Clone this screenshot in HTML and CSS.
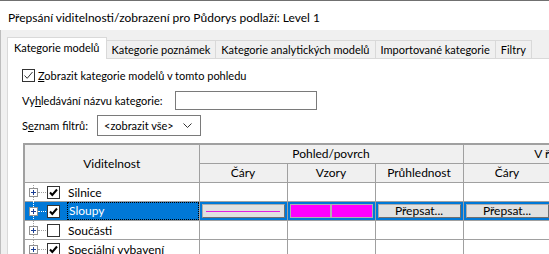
FILE: index.html
```html
<!DOCTYPE html>
<html lang="cs">
<head>
    <meta charset="UTF-8">
    <title>Přepsání viditelnosti/zobrazení</title>
    <link rel="stylesheet" href="styles.css">
</head>
<body>

<div class="window">
    <div class="titlebar">Přepsání viditelnosti/zobrazení pro Půdorys podlaží: Level 1</div>

    <div class="client">
        <div class="tabs">
            <div class="tab active">Kategorie modelů</div>
            <div class="tab">Kategorie poznámek</div>
            <div class="tab">Kategorie analytických modelů</div>
            <div class="tab">Importované kategorie</div>
            <div class="tab">Filtry</div>
        </div>

        <div class="panel">
            <label class="row check-row">
                <span class="box">
                    <svg width="11" height="11" viewBox="0 0 11 11"><path d="M1.5 5.5 L4.2 8.3 L9.5 2" fill="none" stroke="#333" stroke-width="1"/></svg>
                </span>
                <span><u>Z</u>obrazit kategorie modelů v tomto pohledu</span>
            </label>

            <div class="row search-row">
                <span class="label">Vy<u>h</u>ledávání názvu kategorie:</span>
                <span class="input"></span>
            </div>

            <div class="row filter-row">
                <span class="label">S<u>e</u>znam filtrů:</span>
                <span class="select">
                    <span>&lt;zobrazit vše&gt;</span>
                    <svg width="9" height="6" viewBox="0 0 9 6"><path d="M0.5 0.5 L4.5 4.5 L8.5 0.5" fill="none" stroke="#333" stroke-width="1"/></svg>
                </span>
            </div>

            <div class="grid-wrap">
                <table class="grid">
                    <colgroup>
                        <col class="c-name">
                        <col class="c-cell"><col class="c-cell"><col class="c-cell">
                        <col class="c-cell"><col class="c-cell">
                    </colgroup>
                    <thead>
                        <tr>
                            <th rowspan="2">Viditelnost</th>
                            <th colspan="3">Pohled/povrch</th>
                            <th colspan="2">V řezu</th>
                        </tr>
                        <tr>
                            <th>Čáry</th>
                            <th>Vzory</th>
                            <th>Průhlednost</th>
                            <th>Čáry</th>
                            <th>Vzory</th>
                        </tr>
                    </thead>
                    <tbody>
                        <tr>
                            <td>
                                <div class="name first">
                                    <span class="tree"><span class="plus"></span><span class="dots"></span></span>
                                    <span class="box"><svg width="11" height="11" viewBox="0 0 11 11"><path d="M2 5.5 L4.3 8 L9 2.5" fill="none" stroke="#000" stroke-width="2"/></svg></span>
                                    <span class="txt">Silnice</span>
                                </div>
                            </td>
                            <td></td><td></td><td></td><td></td><td></td>
                        </tr>
                        <tr class="selected">
                            <td>
                                <div class="name">
                                    <span class="tree"><span class="plus"></span><span class="dots"></span></span>
                                    <span class="box"><svg width="11" height="11" viewBox="0 0 11 11"><path d="M2 5.5 L4.3 8 L9 2.5" fill="none" stroke="#000" stroke-width="2"/></svg></span>
                                    <span class="txt focus">Sloupy</span>
                                </div>
                            </td>
                            <td><div class="btn"><div class="line-sample"></div></div></td>
                            <td><div class="pattern"><span></span><span></span></div></td>
                            <td><div class="btn">Přepsat...</div></td>
                            <td><div class="btn">Přepsat...</div></td>
                            <td><div class="btn">Přepsat...</div></td>
                        </tr>
                        <tr>
                            <td>
                                <div class="name">
                                    <span class="tree"><span class="plus"></span><span class="dots"></span></span>
                                    <span class="box"></span>
                                    <span class="txt">Součásti</span>
                                </div>
                            </td>
                            <td></td><td></td><td></td><td></td><td></td>
                        </tr>
                        <tr>
                            <td>
                                <div class="name">
                                    <span class="tree"><span class="plus"></span><span class="dots"></span></span>
                                    <span class="box"><svg width="11" height="11" viewBox="0 0 11 11"><path d="M2 5.5 L4.3 8 L9 2.5" fill="none" stroke="#000" stroke-width="2"/></svg></span>
                                    <span class="txt">Speciální vybavení</span>
                                </div>
                            </td>
                            <td></td><td></td><td></td><td></td><td></td>
                        </tr>
                    </tbody>
                </table>
            </div>
        </div>
    </div>
</div>

</body>
</html>
```

FILE: styles.css
```css
body { margin: 0; font-family: "Segoe UI", Lato, sans-serif; font-size: 11px; color: #000; overflow: hidden; }
.window { width: 549px; height: 254px; overflow: hidden; background: #f0f0f0; }
.titlebar { height: 29px; line-height: 33px; padding-left: 8px; background: #fff; border-top: 1px solid #707070; font-size: 12px; }
.client { border-left: 1px solid #bdbdbd; padding: 7px 0 0 6px; height: 224px; }

.tabs { display: flex; align-items: flex-end; height: 21px; }
.tab { height: 18px; line-height: 18px; padding: 0 5px; border: 1px solid #d9d9d9; border-left: none; border-bottom: none; background: #f0f0f0; box-sizing: border-box; white-space: nowrap; }
.tab.active { height: 22px; line-height: 20px; padding: 0 6px; border-left: 1px solid #d9d9d9; background: #fff; margin-bottom: -1px; position: relative; z-index: 1; }

.panel { background: #fff; border-top: 1px solid #d9d9d9; border-left: 1px solid #d9d9d9; height: 200px; padding: 8px 0 0 14px; }
.row { display: flex; align-items: center; white-space: nowrap; }
.check-row { height: 16px; gap: 3px; }
.search-row { margin-top: 7px; height: 20px; }
.search-row .label { width: 153px; }
.input { width: 142px; height: 19px; box-sizing: border-box; border: 1px solid #7a7a7a; }
.filter-row { margin-top: 5px; height: 21px; }
.filter-row .label { width: 75px; }
.select { width: 104px; height: 21px; box-sizing: border-box; border: 1px solid #7a7a7a; display: flex; align-items: center; justify-content: space-between; padding: 0 8px 0 6px; }

.box { width: 13px; height: 13px; box-sizing: border-box; border: 1px solid #333; display: inline-flex; align-items: center; justify-content: center; background: #fff; flex: none; }

.grid-wrap { margin: 7px 0 0 1px; }
.grid { border-collapse: collapse; table-layout: fixed; width: 615px; border-top: 2px solid #a0a0a0; border-left: 2px solid #a0a0a0; font-size: 12px; }
.c-name { width: 175px; }
.c-cell { width: 88px; }
.grid th { background: #f0f0f0; font-weight: normal; border: 1px solid #a0a0a0; padding: 0; text-align: center; height: 18px; line-height: 18px; }
.grid tbody tr { height: 19px; }
.grid td { border: 1px solid #a0a0a0; padding: 0; background: #fff; height: 18px; }

.name { display: flex; align-items: center; height: 18px; }
.tree { width: 22px; height: 18px; position: relative; flex: none; }
.tree::before { content: ""; position: absolute; left: 8px; top: -1px; bottom: -1px; border-left: 1px dotted #a0a0a0; }
.first .tree::before { top: 2px; }
.plus { position: absolute; left: 4px; top: 5px; width: 9px; height: 9px; box-sizing: border-box; border: 1px solid #919191; background: #fff; z-index: 1; }
.plus::before { content: ""; position: absolute; left: 1px; top: 3px; width: 5px; height: 1px; background: #1c3f94; }
.plus::after { content: ""; position: absolute; left: 3px; top: 1px; width: 1px; height: 5px; background: #1c3f94; }
.dots { position: absolute; left: 13px; top: 9px; width: 8px; border-top: 1px dotted #a0a0a0; }
.name .box { margin-right: 7px; }
.txt { padding: 0 1px; }

.selected td { background: #0078d7; }
.selected .name { color: #fff; }
.selected .tree::before, .selected .dots { border-color: #fff; }
.selected .focus { flex: 1; align-self: stretch; box-sizing: border-box; border: 1px dotted #000; line-height: 16px; }
.btn { height: 14px; margin: 2px; box-sizing: border-box; background: #e1e1e1; border: 1px solid #adadad; border-right-color: #707070; border-bottom-color: #707070; line-height: 12px; display: flex; align-items: center; justify-content: center; }
.line-sample { width: 74px; height: 0; border-top: 1px solid #e01ee0; }
.pattern { height: 14px; margin: 2px; display: flex; gap: 2px; background: #b0b0b0; border: 1px solid #b0b0b0; box-sizing: border-box; }
.pattern span { flex: 1; background: #ff00ff; }
```
